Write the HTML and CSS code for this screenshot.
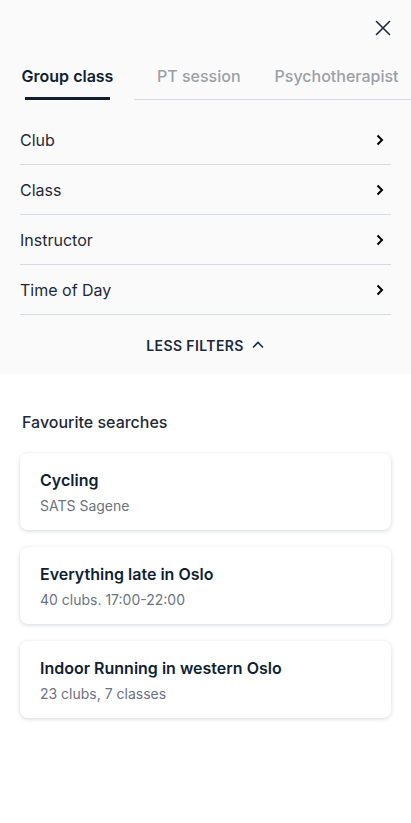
FILE: index.html
```html
<!DOCTYPE html>
<html lang="en">
<head>
<meta charset="utf-8">
<link rel="stylesheet" href="styles.css">
</head>
<body>
<div class="filters">
  <div class="close-row">
    <button class="close" aria-label="Close">
      <svg width="16" height="16" viewBox="0 0 16 16"><path d="M1.5 1.5 14.5 14.5 M14.5 1.5 1.5 14.5" stroke="#1b2a3d" stroke-width="1.6" fill="none" stroke-linecap="round"/></svg>
    </button>
  </div>
  <div class="tabs">
    <div class="tab active">Group class</div>
    <div class="tab-rest">
      <div class="tab pt">PT session</div>
      <div class="tab psy">Psychotherapist</div>
    </div>
  </div>
  <ul class="filter-list">
    <li class="filter-row"><span>Club</span><svg class="chev" width="10" height="12" viewBox="0 0 10 12"><path d="M2.5 1.5 7 6 2.5 10.5" stroke="#000" stroke-width="2" fill="none"/></svg></li>
    <li class="filter-row"><span>Class</span><svg class="chev" width="10" height="12" viewBox="0 0 10 12"><path d="M2.5 1.5 7 6 2.5 10.5" stroke="#000" stroke-width="2" fill="none"/></svg></li>
    <li class="filter-row"><span>Instructor</span><svg class="chev" width="10" height="12" viewBox="0 0 10 12"><path d="M2.5 1.5 7 6 2.5 10.5" stroke="#000" stroke-width="2" fill="none"/></svg></li>
    <li class="filter-row"><span>Time of Day</span><svg class="chev" width="10" height="12" viewBox="0 0 10 12"><path d="M2.5 1.5 7 6 2.5 10.5" stroke="#000" stroke-width="2" fill="none"/></svg></li>
  </ul>
  <div class="less">
    <span>LESS FILTERS</span>
    <svg width="14" height="10" viewBox="0 0 14 10"><path d="M2 7.5 7 2.5 12 7.5" stroke="#1b2a3d" stroke-width="1.6" fill="none"/></svg>
  </div>
</div>
<section class="favourites">
  <h2>Favourite searches</h2>
  <div class="card">
    <div class="card-title">Cycling</div>
    <div class="card-sub">SATS Sagene</div>
  </div>
  <div class="card">
    <div class="card-title">Everything late in Oslo</div>
    <div class="card-sub">40 clubs. 17:00-22:00</div>
  </div>
  <div class="card">
    <div class="card-title">Indoor Running in western Oslo</div>
    <div class="card-sub">23 clubs, 7 classes</div>
  </div>
</section>
</body>
</html>
```
FILE: styles.css
```css
* { box-sizing: border-box; }
html, body { margin: 0; padding: 0; }
body {
  font-family: Inter, "Noto Sans", sans-serif;
  color: #1b2a3d;
  background: #fff;
  width: 411px;
  overflow-x: hidden;
}
.filters {
  background: #fafafa;
}
.close-row {
  height: 56px;
  display: flex;
  justify-content: flex-end;
  align-items: center;
  padding-right: 20px;
}
.close {
  border: 0;
  background: none;
  padding: 0;
  width: 16px;
  height: 16px;
  display: flex;
}
.tabs {
  margin-top: 10px;
  display: flex;
  align-items: flex-end;
  padding-left: 25px;
  white-space: nowrap;
}
.tab {
  font-size: 16px;
  line-height: 20px;
  font-weight: 500;
  color: #9aa0a8;
}
.tab.active {
  width: 85px;
  display: flex;
  justify-content: center;
  font-weight: 600;
  color: #0f1f33;
  padding-bottom: 11px;
  border-bottom: 3px solid #0f1f33;
}
.tab-rest {
  flex: 1;
  margin-left: 24px;
  display: flex;
  padding-bottom: 13px;
  border-bottom: 1px solid #d6d9de;
}
.tab.pt { margin-left: 23px; }
.tab.psy { margin-left: 34px; }
.filter-list {
  list-style: none;
  margin: 15px 0 0;
  padding: 0 20px;
}
.filter-row {
  height: 50px;
  border-bottom: 1px solid #d3dbe8;
  display: flex;
  align-items: center;
  justify-content: space-between;
  font-size: 16px;
  color: #1f2a37;
  padding-right: 6px;
}
.chev { display: block; }
.less {
  padding: 21px 0 18px;
  display: flex;
  justify-content: center;
  align-items: center;
  gap: 7px;
  font-size: 14px;
  line-height: 20px;
  font-weight: 600;
  letter-spacing: 0.4px;
  color: #1b2a3d;
}
.less svg { display: block; margin-top: -2px; }
.favourites {
  padding: 36px 20px 40px;
}
.favourites h2 {
  margin: 0 0 19px 2px;
  font-size: 16px;
  line-height: 24px;
  font-weight: 500;
  color: #1f2a37;
}
.card {
  background: #fff;
  border-radius: 8px;
  box-shadow: 0 1px 4px rgba(15, 31, 51, 0.18);
  padding: 16px 20px 14px;
  margin-bottom: 17px;
}
.card-title {
  font-size: 16px;
  line-height: 22px;
  font-weight: 600;
  color: #0f1f33;
}
.card-sub {
  margin-top: 5px;
  font-size: 14px;
  line-height: 20px;
  color: #6b7380;
}
```
